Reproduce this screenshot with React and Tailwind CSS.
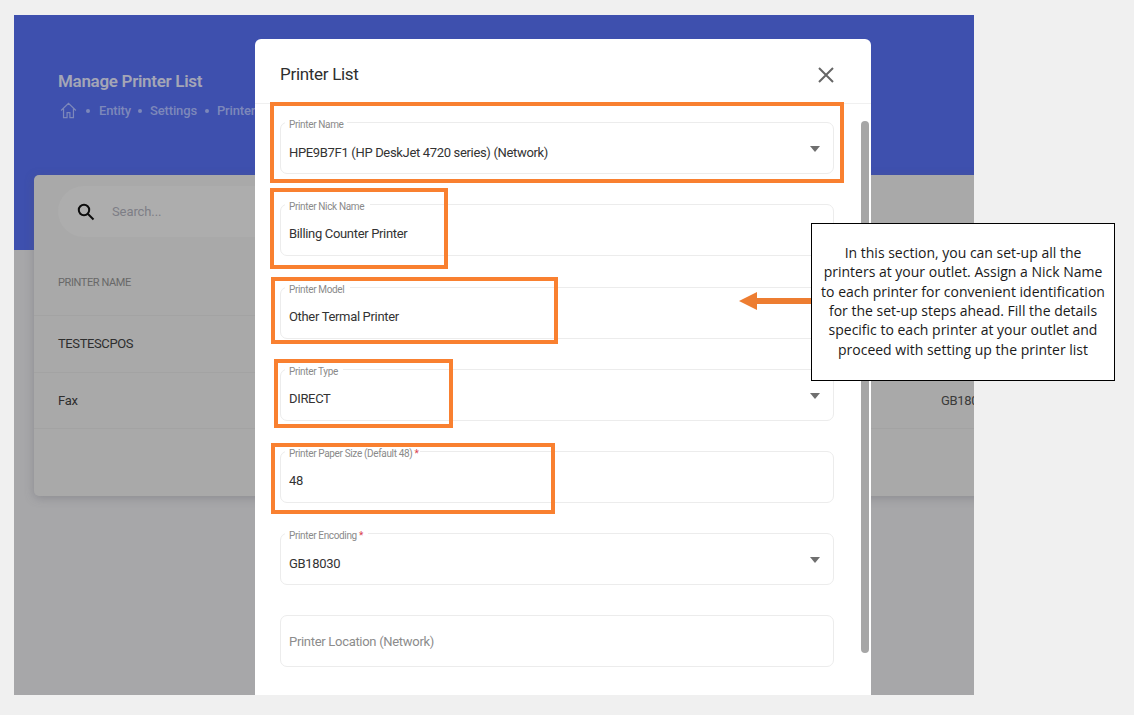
import React from "react";

const Caret = () => (
  <svg width="10" height="6" viewBox="0 0 10 6" className="absolute left-[529px] top-[23px]">
    <path d="M0 0h10L5 6z" fill="#6f6f6f" />
  </svg>
);

function Field({ label, value, req, notch, select, placeholder, low }) {
  return (
    <div className="relative h-[52px] w-[554px] shrink-0 rounded-[7px] border border-[#ececec] bg-white">
      {label && (
        <span
          className="absolute left-[4px] top-[-3px] h-[9px] bg-white pl-[4px] text-[10px] leading-[9px] tracking-[-0.35px] text-[#8a8a8a]"
          style={{ width: notch }}
        >
          <span className="whitespace-nowrap">
            {label}
            {req && <span className="text-[#d9414d]"> *</span>}
          </span>
        </span>
      )}
      {value && (
        <span
          className={
            low
              ? "absolute left-[8px] top-[21px] whitespace-nowrap text-[13px] leading-[18px] tracking-[-0.33px] text-[#333333]"
              : "absolute left-[8px] top-[20px] whitespace-nowrap text-[13px] leading-[18px] tracking-[-0.33px] text-[#333333]"
          }
        >
          {value}
        </span>
      )}
      {placeholder && (
        <span className="absolute left-[8px] top-[17px] whitespace-nowrap text-[13px] leading-[18px] tracking-[-0.3px] text-[#8c8c8c]">
          {placeholder}
        </span>
      )}
      {select && <Caret />}
    </div>
  );
}

const Dot = () => <span className="h-[4px] w-[4px] shrink-0 rounded-full bg-[#7d88ba]" />;

const boxes = [
  "left-[270px] top-[102px] h-[81px] w-[574px]",
  "left-[270px] top-[188px] h-[81px] w-[178px]",
  "left-[271px] top-[277px] h-[67px] w-[287px]",
  "left-[274px] top-[359px] h-[69px] w-[179px]",
  "left-[271px] top-[443px] h-[71px] w-[284px]",
];

export default function App() {
  return (
    <div className="relative h-[715px] w-[1134px] overflow-hidden bg-[#f0f0f0] font-['Roboto',sans-serif]">
      <div className="pl-[14px] pt-[15px]">
        <div className="relative h-[680px] w-[960px] overflow-hidden bg-[#a7a7a9]">
          <div className="h-[235px] bg-[#3e50ae] pl-[44px] pt-[55px]">
            <h1 className="text-[17px] font-semibold leading-[22px] tracking-[-0.3px] text-[#a4a6b6]">Manage Printer List</h1>
            <div className="mt-[9px] flex items-center text-[13px] font-medium tracking-[-0.15px] text-[#7d88ba]">
              <svg width="17" height="17" viewBox="0 0 24 24" fill="none" stroke="#7d88ba" strokeWidth="1.7" className="ml-[2px]">
                <path d="M1.5 12 12 2l10.5 10M5 9.5V22h5v-7h4v7h5V9.5" />
              </svg>
              <span className="ml-[9px] flex items-center">
                <Dot />
                <span className="ml-[9px] mr-[7px]">Entity</span>
                <Dot />
                <span className="ml-[8px] mr-[8px]">Settings</span>
                <Dot />
                <span className="ml-[8px]">Printer</span>
              </span>
            </div>
          </div>

          <div className="relative ml-[20px] mt-[-75px] h-[321px] w-[1000px] rounded-[5px] bg-[#a9a9a9] shadow-[0_2px_10px_rgba(90,90,100,0.35)]">
            <div className="h-[75px] pl-[24px] pt-[11px]">
              <div className="flex h-[51px] w-[300px] items-center rounded-l-full bg-[#adadad] pl-[19px]">
                <svg width="18" height="18" viewBox="0 0 18 18" fill="none" stroke="#0c0c0c" strokeWidth="2">
                  <circle cx="7" cy="7" r="5.2" />
                  <path d="m11 11 5.5 5.5" />
                </svg>
                <span className="ml-[17px] text-[13px] tracking-[-0.1px] text-[#7d7e86]">Search...</span>
              </div>
            </div>
            <div className="flex h-[66px] items-center border-b border-[#a3a3a3] pl-[24px] pt-[2px] text-[11px] tracking-[-0.4px] text-[#686868]">
              PRINTER NAME
            </div>
            <div className="flex h-[57px] items-center border-b border-[#a3a3a3] pl-[24px] text-[13px] tracking-[-0.4px] text-[#2e2e2e]">
              TESTESCPOS
            </div>
            <div className="flex h-[56px] items-center border-b border-[#a3a3a3] pl-[24px] text-[13px] tracking-[-0.3px] text-[#2e2e2e]">
              <span className="w-[883px]">Fax</span>
              <span className="text-[#3a3a3a]">GB18030</span>
            </div>
          </div>

          <div className="absolute left-[241px] top-[24px] h-[700px] w-[616px] rounded-t-[6px] bg-white">
            <div className="flex h-[65px] items-center justify-between border-b border-[#f0f0f0] pl-[25px] pr-[34px]">
              <h2 className="pt-[6px] text-[17px] leading-[24px] tracking-[-0.3px] text-[#2f2f2f]">Printer List</h2>
              <svg width="22" height="22" viewBox="0 0 22 22" stroke="#666666" strokeWidth="2" className="mt-[7px]">
                <path d="m4 4 14 14M18 4 4 18" />
              </svg>
            </div>
            <div className="flex flex-col gap-[30.2px] pl-[25px] pt-[18.2px]">
              <Field label="Printer Name" notch={62} low value="HPE9B7F1 (HP DeskJet 4720 series) (Network)" select />
              <Field label="Printer Nick Name" notch={85} value="Billing Counter Printer" />
              <Field label="Printer Model" notch={65} value="Other Termal Printer" />
              <Field label="Printer Type" notch={58} value="DIRECT" select />
              <Field label="Printer Paper Size (Default 48)" req notch={135} value="48" />
              <Field label="Printer Encoding" req notch={83} low value="GB18030" select />
              <Field placeholder="Printer Location (Network)" />
            </div>
            <div className="absolute left-[606px] top-[82px] h-[532px] w-[8px] rounded-full bg-[#a6a6a6]" />
          </div>
        </div>
      </div>

      {boxes.map((b) => (
        <div key={b} className={`absolute border-[4px] border-[#f98030] ${b}`} />
      ))}

      <svg width="73" height="18" viewBox="0 0 73 18" className="absolute left-[739px] top-[292px]">
        <path d="M0 9 18 0v6h55v6H18v6z" fill="#ed7d31" />
      </svg>

      <div className="absolute left-[811px] top-[223px] flex h-[158px] w-[304px] items-center justify-center border border-black bg-white text-center font-['Open_Sans',sans-serif] text-[14px] leading-[19.3px] text-[#1a1a1a]">
        <p className="mb-[2px] whitespace-nowrap">
          In this section, you can set-up all the
          <br />
          printers at your outlet. Assign a Nick Name
          <br />
          to each printer for convenient identification
          <br />
          for the set-up steps ahead. Fill the details
          <br />
          specific to each printer at your outlet and
          <br />
          proceed with setting up the printer list
        </p>
      </div>
    </div>
  );
}
